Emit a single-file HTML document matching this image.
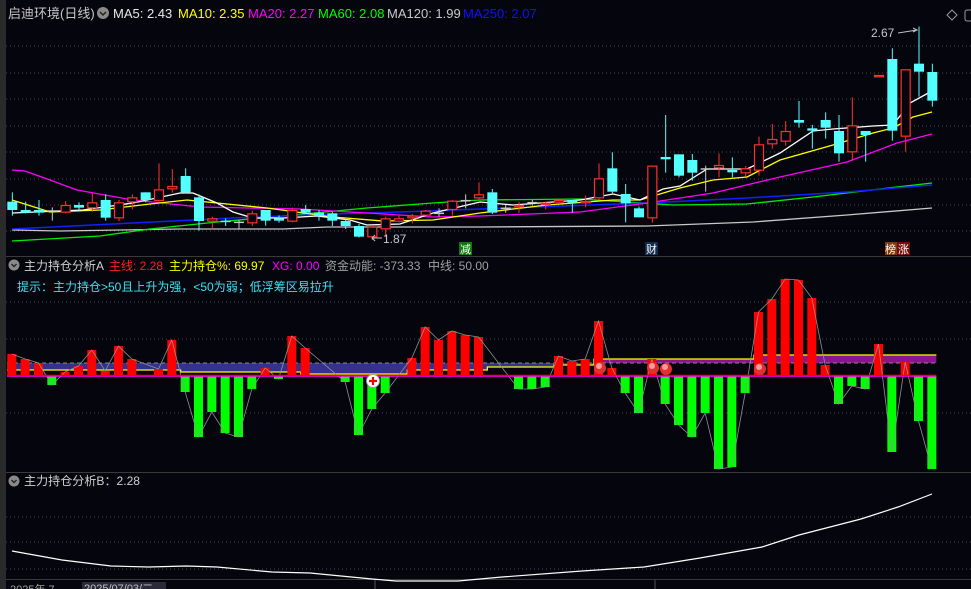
<!DOCTYPE html>
<html><head><meta charset="utf-8">
<style>
html,body{margin:0;padding:0;background:#05050d;width:971px;height:589px;overflow:hidden;}
svg{display:block}
text{font-family:"Liberation Sans","Noto Sans CJK SC",sans-serif;}
</style></head><body>
<svg id="s" width="971" height="589" viewBox="0 0 971 589" xmlns="http://www.w3.org/2000/svg">
<rect x="0" y="0" width="971" height="589" fill="#05050d"/>
<rect x="0" y="0" width="6" height="589" fill="#2a2a2a"/>
<g id="grid" stroke="#4a4a4a" stroke-width="1" stroke-dasharray="1,3">
<line x1="6" y1="46" x2="971" y2="46"/><line x1="6" y1="73" x2="971" y2="73"/><line x1="6" y1="99" x2="971" y2="99"/><line x1="6" y1="126" x2="971" y2="126"/><line x1="6" y1="152" x2="971" y2="152"/><line x1="6" y1="179" x2="971" y2="179"/><line x1="6" y1="205" x2="971" y2="205"/><line x1="6" y1="231" x2="971" y2="231"/>
<line x1="6" y1="302" x2="971" y2="302"/><line x1="6" y1="339" x2="971" y2="339"/><line x1="6" y1="413" x2="971" y2="413"/>
<line x1="6" y1="517" x2="971" y2="517"/><line x1="6" y1="542" x2="971" y2="542"/><line x1="6" y1="569" x2="971" y2="569"/>
</g>
<line x1="6" y1="256.5" x2="971" y2="256.5" stroke="#3a3a3a"/>
<line x1="6" y1="472.5" x2="971" y2="472.5" stroke="#3a3a3a"/>
<line x1="6" y1="579.5" x2="971" y2="579.5" stroke="#3a3a3a"/>
<g id="main"></g>
<g id="ind"></g>
<text x="8" y="18" font-size="13" fill="#c8c8c8">启迪环境(日线)</text>
<circle cx="103" cy="13" r="6" fill="#8a8a8a"/><path d="M100 12 L103 15 L106 12" stroke="#222" stroke-width="1.5" fill="none"/>
<text x="113" y="18" font-size="13" fill="#e8e8e8">MA5: 2.43</text>
<text x="178" y="18" font-size="13" fill="#ffff00">MA10: 2.35</text>
<text x="248" y="18" font-size="13" fill="#ff00ff">MA20: 2.27</text>
<text x="318" y="18" font-size="13" fill="#00ff00">MA60: 2.08</text>
<text x="387" y="18" font-size="13" fill="#c8c8c8">MA120: 1.99</text>
<text x="463" y="18" font-size="13" fill="#1010ff">MA250: 2.07</text>
<path d="M952 10 L957 15 L952 20 L947 15 Z" stroke="#999" fill="none"/>
<rect x="965" y="10" width="10" height="11" rx="2" stroke="#999" fill="none"/>
<text x="871" y="37" font-size="12" fill="#c0c8d0">2.67</text>
<path d="M898 33 L917 30 M913 28 L917 30 L913 32" stroke="#c0c0c0" fill="none"/>
<text x="383" y="243" font-size="12" fill="#c0c8d0">1.87</text>
<path d="M382 238 L372 238 M375 235 L372 238 L375 241" stroke="#c0c0c0" fill="none"/>
<rect x="459" y="242" width="13" height="13" fill="#0a7a0a"/><text x="460" y="253" font-size="11" fill="#fff">减</text>
<rect x="645" y="242" width="13" height="13" fill="#102a50"/><text x="646" y="253" font-size="11" fill="#fff">财</text>
<rect x="885" y="242" width="12" height="13" fill="#7a3a10"/><text x="885" y="253" font-size="11" fill="#fff">榜</text>
<rect x="897" y="242" width="13" height="13" fill="#7a0a0a"/><text x="898" y="253" font-size="11" fill="#fff">涨</text>
<circle cx="14" cy="265" r="5.5" fill="#8a8a8a"/><path d="M11.5 264 L14 266.5 L16.5 264" stroke="#222" stroke-width="1.4" fill="none"/>
<text x="24" y="270" font-size="12" fill="#d0d0d0">主力持仓分析A</text>
<text x="109" y="270" font-size="12" fill="#ff2020">主线: 2.28</text>
<text x="169" y="270" font-size="12" fill="#ffff00">主力持仓%: 69.97</text>
<text x="272" y="270" font-size="12" fill="#ff00ff">XG: 0.00</text>
<text x="325" y="270" font-size="12" fill="#a0a0a0">资金动能: -373.33</text>
<text x="428" y="270" font-size="12" fill="#a0a0a0">中线: 50.00</text>
<text x="17" y="291" font-size="12" fill="#40e0f0">提示：主力持仓&gt;50且上升为强，&lt;50为弱；低浮筹区易拉升</text>
<circle cx="14" cy="481" r="5.5" fill="#8a8a8a"/><path d="M11.5 480 L14 482.5 L16.5 480" stroke="#222" stroke-width="1.4" fill="none"/>
<text x="24" y="485" font-size="12" fill="#d0d0d0" textLength="116" lengthAdjust="spacingAndGlyphs">主力持仓分析B：2.28</text>
<polyline fill="none" stroke="#ffffff" stroke-width="1.2" points="12,551 62,560 111,566 149,567 186,566 217,567 272,572 310,573 372,579 396,581 458,581 502,577 582,571 644,567 700,558 762,547 799,535 861,519 898,507 932,494"/>
<text x="10" y="593" font-size="11" fill="#a0a0a0">2025年  7</text>
<rect x="82" y="582" width="84" height="10" fill="#2a2a3a"/>
<text x="84" y="592" font-size="11" fill="#c0c0c0">2025/07/03/二</text>
<line x1="375" y1="580" x2="375" y2="589" stroke="#555"/><line x1="655" y1="580" x2="655" y2="589" stroke="#555"/>
</svg>
<script>
(function(){
var NS="http://www.w3.org/2000/svg";
function el(p,t,a){var e=document.createElementNS(NS,t);for(var k in a)e.setAttribute(k,a[k]);p.appendChild(e);return e;}
var A=[['c',155,180,127,197],['c',180,188,155,190],['c',180,188,150,197],['g',183,183,172,212],['r',165,188,153,190],['c',165,173,157,185],['r',157,175,128,185],['c',150,203,133,212],['r',157,205,150,213],['r',142,157,133,178],['c',127,150,127,157],['r',118,153,40,155],['r',108,118,57,128],['c',78,127,55,130],['c',142,213,133,242],['r',205,215,200,237],['c',212,215,205,228],['g',217,217,210,237],['r',190,220,183,228],['c',180,212,180,227],['c',205,212,196,218],['r',180,215,173,217],['c',177,188,165,190],['c',188,198,180,212],['c',190,212,185,228],['c',213,228,208,237],['c',228,260,222,262],['r',230,262,225,270],['r',205,238,200,262],['r',205,215,197,217],['r',197,205,192,220],['r',182,197,180,200],['g',190,190,175,200],['r',152,180,150,197],['g',152,152,133,175],['r',133,145,97,150]];
var B=[['c',517,578,507,582],['g',565,565,555,578],['r',555,562,545,578],['g',548,548,540,557],['r',548,555,545,568],['r',540,548,538,552],['c',540,548,540,578],['r',543,550,527,562],['r',475,535,430,540],['c',445,515,397,520],['c',522,550,492,607],['c',565,592,560,592],['r',437,595,437,608],['c',411,418,285,458],['c',403,467,403,472],['c',420,458,402,482],['g',447,447,437,515],['r',435,445,400,472],['c',450,457,412,472],['r',445,460,438,470],['r',373,452,350,467],['r',357,373,312,386],['r',333,365,303,377],['c',300,308,243,323],['c',325,332,315,386],['c',300,323,277,356],['c',333,400,285,425],['r',316,397,232,422],['c',333,345,333,425],['r',165,172,165,172],['c',117,332,85,362],['r',148,350,148,395],['c',131,155,20,230],['c',156,242,131,260]];
var g=document.getElementById('main');
var C=[];
A.forEach(function(d){C.push([d[0],150+d[1]/3,150+d[2]/3,150+d[3]/3,150+d[4]/3]);});
B.forEach(function(d){C.push([d[0],20+d[1]/3,20+d[2]/3,20+d[3]/3,20+d[4]/3]);});
function X(i){return (22+40*i)/3;}
function line(pts,c,w){el(g,'polyline',{points:pts,fill:'none',stroke:c,'stroke-width':w||1});}
line("12,230 60,231 180,229 283,229 327,227 480,227 647,226 753,222 847,215 932,208","#c8c8c8",1.3);
line("12,241 100,236 150,229 217,222 283,216 367,208 433,203 480,200 580,199 673,205 747,204 813,197 880,189 932,183","#00ee00",1.3);
line("12,229 133,223 233,218 333,214 400,212 480,209 647,203 747,198 847,192 932,185","#1020ff",1.5);
line("12,170 25,171 50,180 77,190 133,200 200,207 300,209 367,213 433,217 480,216 580,212 647,203 713,193 780,177 847,162 897,143 932,134","#ff00ff",1.3);
line("12,200 50,212 100,210 150,204 187,200 217,203 267,208 333,217 383,221 433,220 480,213 547,205 613,200 640,200 680,188 713,180 747,177 780,160 833,145 873,133 893,128 913,117 932,112","#ffff00",1.3);
line("12,213 83,210 133,203 180,193 193,193 217,203 233,212 253,218 283,218 317,216 350,220 367,225 400,224 433,213 480,202 513,205 580,200 613,194 640,200 663,189 680,186 707,169 747,169 780,153 813,131 833,129 873,126 893,125 910,103 932,91","#ffffff",1.3);
C.forEach(function(d,i){
 var x=X(i),w=10,cx=x+5,col=d[0]=='c'?'#54ffff':d[0]=='r'?'#ff3030':'#c8c8c8';
 var bt=d[1],bb=d[2];
 if(d[0]=='c'){
  el(g,'line',{x1:cx,y1:d[3],x2:cx,y2:d[4],stroke:col});
  el(g,'rect',{x:x,y:bt,width:w,height:Math.max(bb-bt,1.5),fill:col});
 }else if(d[0]=='r'){
  el(g,'line',{x1:cx,y1:d[3],x2:cx,y2:bt,stroke:col});
  el(g,'line',{x1:cx,y1:bb,x2:cx,y2:d[4],stroke:col});
  el(g,'rect',{x:x+0.5,y:bt+0.5,width:w-1,height:Math.max(bb-bt-1,1),fill:'#05050d',stroke:col,'stroke-width':1.2});
 }else{
  el(g,'line',{x1:cx,y1:d[3],x2:cx,y2:d[4],stroke:col});
  el(g,'line',{x1:x,y1:bt,x2:x+w,y2:bt,stroke:col,'stroke-width':1.5});
 }
});
var V=[354,359,363,385,372,366,350,371,346,359,375,369,340,392,437,412,433,437,389,368,379,336,348,376,377,382,435,409,393,376,358,327,340,331,335,337,376,376,389,389,387,356,361,359,321,368,393,413,359,404,425,437,413,469,467,393,312,299,279,280,298,365,404,386,389,344,452,362,421,469];
var h=document.getElementById('ind');
var Z=376;
var yl=[];for(var i=0;i<70;i++){var y;if(i<13)y=370;else if(i<22)y=372;else if(i<30)y=374;else if(i<36)y=370;else if(i<41)y=367;else if(i<44)y=365;else if(i<56)y=359;else y=355;yl.push(y);}
var END=X(69)+9;
function xe(i){return Math.min(X(i)+13.3,END);}
var pb="7,363 7,370 ";
for(var i=0;i<44;i++){pb+=X(i)+","+yl[i]+" "+xe(i)+","+yl[i]+" ";}
pb+=X(44)+",363";
el(h,'polygon',{points:pb,fill:'#33338f'});
var p2=X(44)+",363 ";for(var i=44;i<70;i++){p2+=X(i)+","+yl[i]+" "+xe(i)+","+yl[i]+" ";}p2+=END+",363";
el(h,'polygon',{points:p2,fill:'#8a158f'});
var ys="";for(var i=0;i<70;i++){ys+=X(i)+","+yl[i]+" "+xe(i)+","+yl[i]+" ";}
el(h,'polyline',{points:"7,370 "+ys,fill:'none',stroke:'#ffff00','stroke-width':1.3});
el(h,'line',{x1:7,y1:363,x2:END,y2:363,stroke:'#888','stroke-dasharray':'4,3'});
var gl="";
V.forEach(function(v,i){var x=X(i);
 if(Math.abs(v-Z)<1.5){return;}
 if(v<Z)el(h,'rect',{x:x,y:v,width:9,height:Z-v,fill:'#ff0000'});
 else el(h,'rect',{x:x,y:Z,width:9,height:v-Z,fill:'#00ff00'});
 gl+=(x+4.5)+","+v+" ";
});
el(h,'polyline',{points:gl,fill:'none',stroke:'#909090','stroke-width':0.8});
el(h,'line',{x1:7,y1:375.5,x2:END,y2:375.5,stroke:'#ff0000','stroke-width':1.5});
el(h,'line',{x1:7,y1:376.5,x2:END,y2:376.5,stroke:'#ff00ff','stroke-width':0.8});
[[600,368],[653,368],[666,369],[760,369]].forEach(function(p){
 el(h,'circle',{cx:p[0],cy:p[1],r:6,fill:'#e03030'});
 el(h,'circle',{cx:p[0]-1,cy:p[1]-2,r:3,fill:'#ff9a9a'});
});
el(h,'circle',{cx:373,cy:381,r:6.5,fill:'#ffffff',stroke:'#999'});
el(h,'path',{d:'M369 381 H377 M373 377 V385',stroke:'#ff0000','stroke-width':2.2});
})();
</script>
</body></html>
